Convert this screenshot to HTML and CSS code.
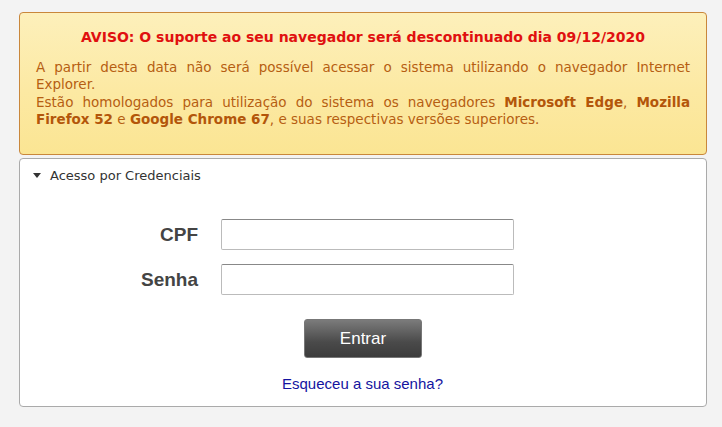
FILE: index.html
```html
<!DOCTYPE html>
<html lang="pt-BR">
<head>
  <meta charset="UTF-8" />
  <title>Acesso</title>
  <link rel="stylesheet" href="styles.css">
</head>
<body>

  <div class="aviso">
    <h3>AVISO: O suporte ao seu navegador será descontinuado dia 09/12/2020</h3>
    <p>A partir desta data não será possível acessar o sistema utilizando o navegador Internet Explorer.<br>
    Estão homologados para utilização do sistema os navegadores <b>Microsoft Edge</b>, <b>Mozilla Firefox 52</b> e <b>Google Chrome 67</b>, e suas respectivas versões superiores.</p>
  </div>

  <div class="painel">
    <div class="painel-titulo"><span class="seta"></span>Acesso por Credenciais</div>
    <form class="login">
      <div class="linha">
        <label>CPF</label>
        <input type="text">
      </div>
      <div class="linha">
        <label>Senha</label>
        <input type="password">
      </div>
      <div class="acoes">
        <button type="button">Entrar</button>
        <a href="#">Esqueceu a sua senha?</a>
      </div>
    </form>
  </div>

</body>
</html>
```

FILE: styles.css
```css
body {
  margin: 0;
  padding: 12px 15px 0 19px;
  background: #f3f3f3;
  font-family: "DejaVu Sans", Verdana, sans-serif;
}

.aviso {
  border: 1px solid #c9873b;
  border-radius: 4px;
  background: linear-gradient(#fdf0bb, #fce9a3 55%, #fbe593);
  padding: 14px 16px 28px 16px;
  height: 99px;
}

.aviso h3 {
  margin: 0 0 12px 0;
  text-align: center;
  color: #e0100f;
  font-size: 14px;
  line-height: 20px;
}

.aviso p {
  margin: 0;
  color: #b65e12;
  font-size: 13.5px;
  line-height: 17.4px;
  text-align: justify;
}

.aviso b {
  color: #b3560a;
}

.painel {
  margin-top: 3px;
  background: #fff;
  border: 1px solid #aaa;
  border-radius: 4px;
  height: 247px;
}

.painel-titulo {
  padding: 8px 0 0 13px;
  font-size: 13px;
  line-height: 17px;
  color: #333;
  display: flex;
  align-items: center;
}

.seta {
  width: 0;
  height: 0;
  border-left: 4px solid transparent;
  border-right: 4px solid transparent;
  border-top: 5px solid #333;
  margin-right: 9px;
}

.login {
  padding-top: 35px;
  font-family: "Liberation Sans", Arial, sans-serif;
}

.linha {
  display: flex;
  align-items: center;
  margin-bottom: 14px;
}

.linha label {
  width: 178px;
  text-align: right;
  font-weight: bold;
  font-size: 19px;
  color: #444;
  margin-right: 23px;
}

.linha input {
  width: 291px;
  height: 29px;
  margin: 0;
  padding: 0;
  border: 1px solid #bbb;
  border-top-color: #888;
  border-radius: 2px;
  background: #fff;
}

.acoes {
  display: flex;
  flex-direction: column;
  align-items: center;
  padding-top: 10px;
  margin-left: -1px;
}

.acoes button {
  width: 118px;
  height: 39px;
  border: 1px solid #777;
  border-radius: 3px;
  background: linear-gradient(#7b7b7b, #4a4a4a 60%, #3c3c3c);
  color: #fff;
  font-family: "Liberation Sans", Arial, sans-serif;
  font-size: 17px;
  margin-left: 1px;
  margin-right: 0;
}

.acoes a {
  margin-top: 17px;
  color: #1414a0;
  text-decoration: none;
  font-size: 15px;
}
```
